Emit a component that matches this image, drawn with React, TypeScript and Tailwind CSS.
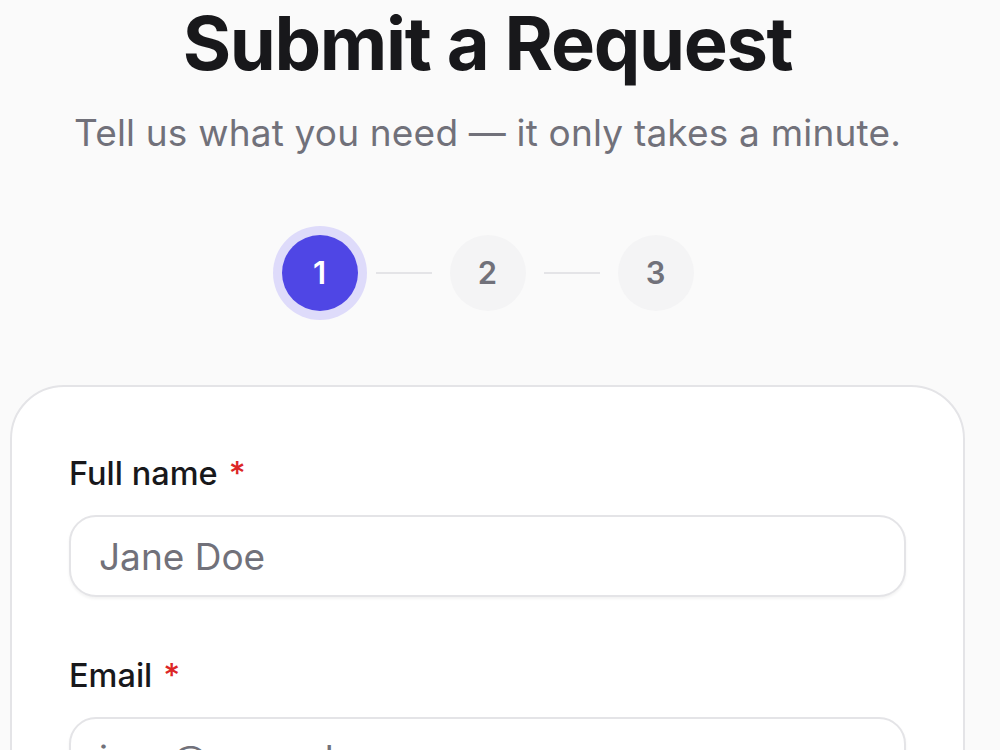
import React from "react";

type Step = { n: number; active: boolean };

const steps: Step[] = [
  { n: 1, active: true },
  { n: 2, active: false },
  { n: 3, active: false },
];

function StepDot({ n, active }: Step) {
  return active ? (
    <div className="flex h-[76px] w-[76px] items-center justify-center rounded-full bg-[#4f46e5] text-[31px] font-semibold text-white shadow-[0_0_0_9px_#dedbfa]">
      {n}
    </div>
  ) : (
    <div className="flex h-[76px] w-[76px] items-center justify-center rounded-full bg-[#f4f4f5] text-[31px] font-semibold text-[#71717a]">
      {n}
    </div>
  );
}

function Stepper() {
  return (
    <div className="flex items-center gap-[18px]">
      {steps.map((s, i) => (
        <React.Fragment key={s.n}>
          {i > 0 && <div className="h-[2px] w-[56px] bg-[#e4e4e7]" />}
          <StepDot {...s} />
        </React.Fragment>
      ))}
    </div>
  );
}

function Field({
  label,
  placeholder,
  type = "text",
}: {
  label: string;
  placeholder: string;
  type?: string;
}) {
  return (
    <label className="flex flex-col">
      <span className="text-[32.5px] leading-[48px] font-medium text-[#18181b]">
        {label}
        <span className="ml-[11px] text-[#dc2626]">*</span>
      </span>
      <input
        type={type}
        placeholder={placeholder}
        className="mt-[17px] h-[82px] w-full rounded-[27px] border-2 border-[#e4e4e7] bg-white px-[28px] text-[37px] text-[#18181b] shadow-[0_2px_3px_rgba(0,0,0,0.05)] outline-none placeholder:text-[#71717a]"
      />
    </label>
  );
}

export default function App() {
  return (
    <div className="min-h-screen bg-[#fafafa] font-['Inter',sans-serif]">
      <div className="flex w-[975px] flex-col items-center px-[10px] pb-[60px]">
        <h1 className="mt-[6px] text-[74px] leading-none font-bold tracking-[-0.018em] text-[#18181b]">
          Submit a Request
        </h1>
        <p className="mt-[26px] text-[37px] leading-[54px] tracking-[0.005em] text-[#71717a]">
          Tell us what you need — it only takes a minute.
        </p>
        <div className="mt-[75px]">
          <Stepper />
        </div>
        <form className="mt-[74px] flex w-full flex-col gap-[55px] rounded-[54px] border-2 border-[#e4e4e7] bg-white px-[57px] pt-[63px] pb-[60px]">
          <Field label="Full name" placeholder="Jane Doe" />
          <Field label="Email" placeholder="jane@example.com" type="email" />
          <Field label="Company" placeholder="Acme Inc." />
        </form>
      </div>
    </div>
  );
}
